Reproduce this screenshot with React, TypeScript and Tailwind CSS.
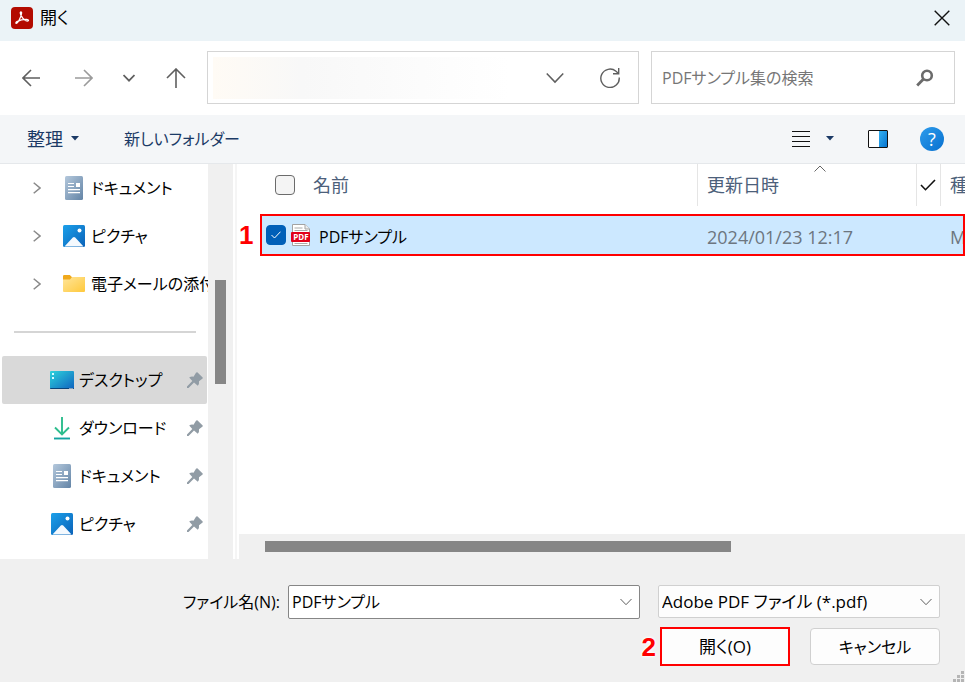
import { useState } from "react";

const DocumentIcon = () => (
  <svg width="24" height="24" viewBox="0 0 24 24" aria-hidden="true">
    <defs>
      <linearGradient id="doc" x1="0" y1="0" x2="1" y2="1">
        <stop offset="0" stopColor="#b4c8dc" />
        <stop offset="1" stopColor="#6384a6" />
      </linearGradient>
    </defs>
    <rect x="3" y="0" width="18" height="24" rx="1.5" fill="url(#doc)" />
    <path d="M6 7.5h6M6 10.5h6M6 13.7h12M6 16.7h12" stroke="#fff" strokeWidth="1.2" />
    <rect x="14" y="7" width="4" height="4" fill="#fff" />
  </svg>
);

const PictureIcon = () => (
  <svg width="24" height="24" viewBox="0 0 24 24" aria-hidden="true">
    <defs>
      <linearGradient id="pic" x1="0" y1="0" x2="1" y2="1">
        <stop offset="0" stopColor="#1ba0ea" />
        <stop offset="1" stopColor="#0b62b8" />
      </linearGradient>
    </defs>
    <rect x="1" y="1" width="22" height="22" rx="1.5" fill="url(#pic)" />
    <path d="M2.5 22.5L10.8 13.6a1.6 1.6 0 0 1 2.4 0L21.5 22.5z" fill="#f4f9fe" />
    <circle cx="17.5" cy="6.5" r="2" fill="#fff" />
  </svg>
);

const FolderIcon = () => (
  <svg width="24" height="24" viewBox="0 0 24 24" aria-hidden="true">
    <defs>
      <linearGradient id="folder" x1="0" y1="0" x2="1" y2="1">
        <stop offset="0" stopColor="#ffe59a" />
        <stop offset="1" stopColor="#ffc93c" />
      </linearGradient>
    </defs>
    <path d="M1 4.2Q1 3 2.2 3h5.6l2 2H22q1 0 1 1v6H1z" fill="#f0a91c" />
    <path d="M1 7.5h7L10 5h12q1 0 1 1v13q0 1-1 1H2q-1 0-1-1z" fill="url(#folder)" />
  </svg>
);

const DesktopIcon = () => (
  <svg width="24" height="24" viewBox="0 0 24 24" aria-hidden="true">
    <defs>
      <linearGradient id="desktop" x1="0" y1="0" x2="1" y2="1">
        <stop offset="0" stopColor="#2dd3dc" />
        <stop offset="1" stopColor="#0f63bf" />
      </linearGradient>
    </defs>
    <rect x="0" y="3" width="24" height="18" rx="1" fill="url(#desktop)" />
    <path d="M0 20h24q0 1-1 1H1q-1 0-1-1z" fill="#0b4478" />
    <path d="M2 5h2v2H2zM2 9h2v2H2z" fill="#d6fbff" />
    <path d="M19.5 20h1v1h-1zM21.5 20h1v1h-1z" fill="#fff" />
  </svg>
);

const DownloadIcon = () => (
  <svg width="24" height="24" viewBox="0 0 24 24" fill="none" strokeWidth="1.9" aria-hidden="true">
    <path d="M12 1v17M5 11.5l7 7 7-7" stroke="#2dbd8d" />
    <path d="M4 22.5h16" stroke="#12a4a0" />
  </svg>
);

const PinIcon = () => (
  <svg width="16" height="16" viewBox="0 0 16 16" aria-hidden="true">
    <path
      d="M10.300 0.300L15.700 5.500Q16 6.200 15.300 6.800L12 9.300Q12.500 12.200 10.800 13.800L7 10.500 1.500 16H0v-1.500L5.300 9 2.200 5.600Q4 4.200 6.500 4.700L9 .8Q9.600 0 10.300 .3z"
      fill="#919ca5"
    />
  </svg>
);

const Caret = () => (
  <svg width="8" height="5" viewBox="0 0 8 5" aria-hidden="true">
    <path d="M0 0h8L4 4.500z" fill="#1b3a66" />
  </svg>
);

const ChevronDown = ({ size = 12, color = "#5f5f5f", width = 1.2 }) => (
  <svg width={size} height={size} viewBox="0 0 12 12" fill="none" aria-hidden="true">
    <path d="M0.500 3L6 8.700 11.500 3" stroke={color} strokeWidth={width} />
  </svg>
);

const PdfFileIcon = () => (
  <svg className="shrink-0" width="20" height="22" viewBox="0 0 20 22" aria-hidden="true">
    <path d="M1.500.5h12.500l4.500 4.500v16.500h-17z" fill="#fff" stroke="#a3a3a3" />
    <path d="M14 .5v4.500h4.500" fill="#eee" stroke="#a3a3a3" />
    <path d="M3.500 4h8M3.500 6.500h13M3.500 19.500h13" stroke="#aaa" />
    <rect x="0" y="8" width="19" height="10" rx="1" fill="#e2001a" />
    <text x="10" y="16" fontSize="8" fontWeight="700" fill="#fff" textAnchor="middle" fontFamily="Open Sans, sans-serif">
      PDF
    </text>
  </svg>
);

const treeItems = [
  { label: "ドキュメント", icon: <DocumentIcon /> },
  { label: "ピクチャ", icon: <PictureIcon /> },
  { label: "電子メールの添付", icon: <FolderIcon /> },
];

const pinnedItems = [
  { label: "デスクトップ", icon: <DesktopIcon /> },
  { label: "ダウンロード", icon: <DownloadIcon /> },
  { label: "ドキュメント", icon: <DocumentIcon /> },
  { label: "ピクチャ", icon: <PictureIcon /> },
];

const markClass =
  "font-['Liberation_Sans',sans-serif] text-[26px] leading-none font-bold text-[#ff0000] [text-shadow:0_0_2px_#fff,0_0_3px_#fff,0_0_4px_#fff]";

export default function App() {
  const [current, setCurrent] = useState("デスクトップ");
  const [fileName, setFileName] = useState("PDFサンプル");
  const [checked, setChecked] = useState(true);

  return (
    <div className="relative flex min-h-screen flex-col bg-[#f0f0f0] font-['Open_Sans','Noto_Sans_CJK_JP',sans-serif] text-base leading-6 text-black [font-feature-settings:'palt']">
      <header className="flex h-[41px] items-center justify-between bg-[#ebf3f7] pr-[15px] pb-[5px] pl-[11px]">
        <div className="flex items-center gap-[7px]">
          <svg width="22" height="22" viewBox="0 0 22 22" aria-hidden="true">
            <rect width="22" height="22" rx="4" fill="#b30b00" />
            <path
              d="M5 16.300c1.500.8 5.500-6.800 5.600-10.200 0-1.600-1.500-1.500-1.300 0 .4 3.500 4.300 8 7 8 1.700 0 1.500-1.700-.6-1.800-3.600-.1-7.300 1-9.700 2.300-1 .6-1.400 1.400-1 1.700z"
              fill="none"
              stroke="#fff"
              strokeWidth="1.300"
            />
          </svg>
          <h1 className="text-[17px]">開く</h1>
        </div>
        <button aria-label="閉じる">
          <svg width="16" height="16" viewBox="0 0 16 16" aria-hidden="true">
            <path d="M.7.7l14.600 14.600M15.300.7L.7 15.300" stroke="#111" strokeWidth="1.400" />
          </svg>
        </button>
      </header>

      <div className="flex h-[74px] items-center bg-white pr-[10px] pb-px pl-[22px]">
        <nav className="flex w-[185px] shrink-0 items-center" aria-label="移動">
          <button className="w-[53px]" aria-label="戻る">
            <svg width="18" height="18" viewBox="0 0 18 18" fill="none" stroke="#5f5f5f" strokeWidth="1.600" aria-hidden="true">
              <path d="M18 9H1M9 1L1 9l8 8" />
            </svg>
          </button>
          <button className="w-[48px]" aria-label="進む">
            <svg width="18" height="18" viewBox="0 0 18 18" fill="none" stroke="#9b9b9b" strokeWidth="1.600" aria-hidden="true">
              <path d="M0 9h17M9 1l8 8-8 8" />
            </svg>
          </button>
          <button className="w-[43px]" aria-label="最近表示した場所">
            <ChevronDown width={1.8} />
          </button>
          <button aria-label="上へ">
            <svg width="20" height="20" viewBox="0 0 20 20" fill="none" stroke="#5f5f5f" strokeWidth="1.600" aria-hidden="true">
              <path d="M10 20V1M1 10l9-9 9 9" />
            </svg>
          </button>
        </nav>
        <div className="flex h-[53px] min-w-0 flex-1 items-center border border-[#d5d5d5] pr-[18px] pl-[5px]">
          <div className="mr-9 h-[42px] flex-1 bg-linear-to-r from-[#fffbf5] via-[#f8f8f8] via-30% to-white" />
          <button className="mr-9" aria-label="以前の場所">
            <ChevronDown size={18} width={1} />
          </button>
          <button aria-label="最新の情報に更新">
            <svg width="20" height="20" viewBox="0 0 20 20" fill="none" stroke="#5f5f5f" strokeWidth="1.400" aria-hidden="true">
              <path d="M19.200 9.500A9.200 9.200 0 1 1 16 3.300L18.500 5.500M18.700 0v5.700H13" />
            </svg>
          </button>
        </div>
        <label className="ml-3 flex h-[53px] w-[304px] items-center border border-[#d5d5d5] pr-5 pl-[10px]">
          <input
            type="search"
            aria-label="検索"
            placeholder="PDFサンプル集の検索"
            className="min-w-0 flex-1 outline-none placeholder:text-[#767676]"
          />
          <svg width="18" height="18" viewBox="0 0 18 18" fill="none" stroke="#6b6b6b" aria-hidden="true">
            <circle cx="11" cy="6.500" r="4.800" strokeWidth="2.600" />
            <path d="M7.500 10L1.200 16.500" strokeWidth="2.800" />
          </svg>
        </label>
      </div>

      <div className="flex h-[49px] items-center border-b border-[#e5e8eb] bg-[#f4f6f8] pr-[21px] pb-px pl-[27px] text-[#1b3a66]">
        <button className="mr-[45px] flex items-center gap-2 text-lg">
          整理
          <Caret />
        </button>
        <button>新しいフォルダー</button>
        <div className="ml-auto flex items-center">
          <button className="mr-[34px] flex items-center gap-4" aria-label="表示方法">
            <svg width="18" height="16" viewBox="0 0 18 16" aria-hidden="true">
              <path d="M0 .5h18M0 5.500h18M0 10.500h18M0 15.500h18" stroke="#111" />
            </svg>
            <Caret />
          </button>
          <button className="mr-8" aria-label="プレビュー ウィンドウ">
            <svg className="block" width="20" height="18" viewBox="0 0 20 18" aria-hidden="true">
              <defs>
                <linearGradient id="pane" x1="0" y1="0" x2="1" y2="1">
                  <stop offset="0" stopColor="#35b1f1" />
                  <stop offset="1" stopColor="#0674cf" />
                </linearGradient>
              </defs>
              <rect x=".5" y=".5" width="19" height="17" rx=".5" fill="#fff" stroke="#111" />
              <rect x="11" y="1" width="8" height="16" fill="url(#pane)" />
            </svg>
          </button>
          <button
            className="size-6 rounded-full bg-linear-to-br from-[#2c9cec] to-[#0670cf] text-lg leading-6 text-white"
            aria-label="ヘルプ"
          >
            ?
          </button>
        </div>
      </div>

      <div className="flex bg-white">
        <aside className="w-[208px] shrink-0 pb-[11px]">
          <ul>
            {treeItems.map((item) => (
              <li key={item.label}>
                <button className="flex h-12 w-full items-center overflow-hidden pl-[33px] whitespace-nowrap">
                  <svg className="mr-[21px] shrink-0" width="8" height="12" viewBox="0 0 8 12" fill="none" aria-hidden="true">
                    <path d="M.7.7L7 6 .7 11.300" stroke="#8a8a8a" strokeWidth="1.500" />
                  </svg>
                  <span className="mr-[5px] shrink-0">{item.icon}</span>
                  {item.label}
                </button>
              </li>
            ))}
          </ul>
          <div className="flex h-12 items-center pr-3 pl-[14px]">
            <hr className="w-full border-t-2 border-[#d5d5d5]" />
          </div>
          <ul className="pr-px pl-[2px]">
            {pinnedItems.map((item) => (
              <li key={item.label}>
                <button
                  onClick={() => setCurrent(item.label)}
                  className={
                    "flex h-12 w-full items-center rounded-xs pr-1 pl-12 " +
                    (current === item.label ? "bg-[#d9d9d9]" : "")
                  }
                >
                  <span className="mr-[5px] shrink-0">{item.icon}</span>
                  <span className="mr-auto">{item.label}</span>
                  <PinIcon />
                </button>
              </li>
            ))}
          </ul>
        </aside>
        <div className="w-[25px] shrink-0 bg-[#f0f0f0] pt-[116px] pl-[7px]">
          <div className="h-[104px] w-[11px] bg-[#868686]" />
        </div>
        <div className="ml-[2px] w-[2px] shrink-0 bg-[#f5f5f5]" />

        <main className="relative flex min-w-0 flex-1 flex-col pl-[2px]">
          <table className="ml-[21px] w-[calc(100%-21px)] table-fixed border-collapse text-left">
            <colgroup>
              <col />
              <col className="w-[219px]" />
              <col className="w-[24px]" />
              <col className="w-[24px]" />
            </colgroup>
            <thead className="text-lg text-[#4c607a]">
              <tr className="h-[50px] align-top">
                <th className="p-0 font-normal">
                  <div className="flex h-[42px] items-center border-r border-[#e5e5e5] pb-px pl-[15px]">
                    <input
                      type="checkbox"
                      aria-label="すべて選択"
                      className="mr-[18px] size-5 appearance-none rounded-sm border border-[#6b6b6b] bg-[#f4f4f4]"
                    />
                    名前
                  </div>
                </th>
                <th className="p-0 font-normal">
                  <div className="relative flex h-[42px] items-center border-r border-[#e5e5e5] pl-[9px]">
                    更新日時
                    <svg className="absolute top-px left-1/2 ml-[7px]" width="12" height="7" viewBox="0 0 12 7" fill="none" aria-hidden="true">
                      <path d="M.5 6.500L6 1l5.500 5.500" stroke="#666" />
                    </svg>
                  </div>
                </th>
                <th className="p-0 font-normal">
                  <div className="flex h-[42px] items-center border-r border-[#e5e5e5] pl-[3px]">
                    <svg width="16" height="12" viewBox="0 0 16 12" fill="none" aria-label="状態">
                      <path d="M1 6l4.500 4.700L15 1" stroke="#111" strokeWidth="1.600" />
                    </svg>
                  </div>
                </th>
                <th className="p-0 font-normal">
                  <div className="flex h-[42px] items-center overflow-hidden pl-[9px] whitespace-nowrap">種類</div>
                </th>
              </tr>
            </thead>
            <tbody>
              <tr className="h-[42px] bg-[#cce8ff] text-lg text-[#6d7680] outline-2 -outline-offset-2 outline-[#ff0000]">
                <td className="p-0">
                  <label className="flex items-center pl-[6px] text-base text-black">
                    <span className="relative mr-[5px] flex size-5">
                      <input
                        type="checkbox"
                        checked={checked}
                        onChange={(e) => setChecked(e.target.checked)}
                        className="size-5 appearance-none rounded-sm border border-[#005fb8] bg-white checked:bg-[#005fb8]"
                      />
                      <svg className="pointer-events-none absolute top-[6px] left-[5px]" width="10" height="8" viewBox="0 0 10 8" fill="none" aria-hidden="true">
                        <path d="M.5 4l3 3 6-6.300" stroke="#fff" />
                      </svg>
                    </span>
                    <PdfFileIcon />
                    <span className="pt-[3px] pl-2">PDFサンプル</span>
                  </label>
                </td>
                <td className="p-0 pt-[3px] pl-[9px]">2024/01/23 12:17</td>
                <td className="p-0" />
                <td className="overflow-hidden p-0 pt-[3px] pl-[9px] whitespace-nowrap">Microsoft Edge PDF Document</td>
              </tr>
            </tbody>
          </table>
          <span className={`absolute top-[58px] left-[2px] ${markClass}`}>1</span>
          <div className="mt-auto h-[25px] bg-[#f0f0f0] pt-[7px] pl-[26px]">
            <div className="h-[11px] w-2/3 max-w-[466px] bg-[#868686]" />
          </div>
        </main>
      </div>

      <footer className="flex flex-col gap-2 pt-[26px] pr-[25px] pb-4">
        <div className="flex items-center">
          <label htmlFor="file-name" className="w-[280px] shrink-0 text-right">
            ファイル名(N):
          </label>
          <div className="ml-2 flex h-[34px] min-w-0 flex-1 items-center rounded-xs border border-[#868686] bg-white pr-[7px] pl-[3px]">
            <input
              id="file-name"
              type="text"
              value={fileName}
              onChange={(e) => setFileName(e.target.value)}
              className="min-w-0 flex-1 outline-none"
            />
            <button aria-label="ファイル名の一覧">
              <ChevronDown width={1} />
            </button>
          </div>
          <div className="relative ml-[18px] w-[282px] shrink-0 pb-px">
            <select
              aria-label="ファイルの種類"
              className="block h-[33px] w-full appearance-none rounded-xs border border-[#d0d0d0] bg-[#fdfdfd] pl-[3px] text-[17px]"
            >
              <option>Adobe PDF ファイル (*.pdf)</option>
            </select>
            <span className="pointer-events-none absolute inset-y-0 right-[8px] flex items-center">
              <ChevronDown width={1} />
            </span>
          </div>
        </div>
        <div className="flex items-center justify-end">
          <span className={`mr-1 ${markClass}`}>2</span>
          <button className="h-[39px] w-[130px] border-2 border-[#ff0000] bg-[#fdfdfd] text-[17px]">開く(O)</button>
          <button className="ml-5 h-[37px] w-[130px] rounded-sm border border-[#d0d0d0] bg-[#fdfdfd]">キャンセル</button>
        </div>
      </footer>

      <svg className="absolute right-0 bottom-0" width="12" height="12" viewBox="0 0 12 12" fill="#b5b5b5" aria-hidden="true">
        <path d="M8 1h3v3H8zM4 5h3v3H4zM8 5h3v3H8zM0 9h3v3H0zM4 9h3v3H4zM8 9h3v3H8z" />
      </svg>
    </div>
  );
}
